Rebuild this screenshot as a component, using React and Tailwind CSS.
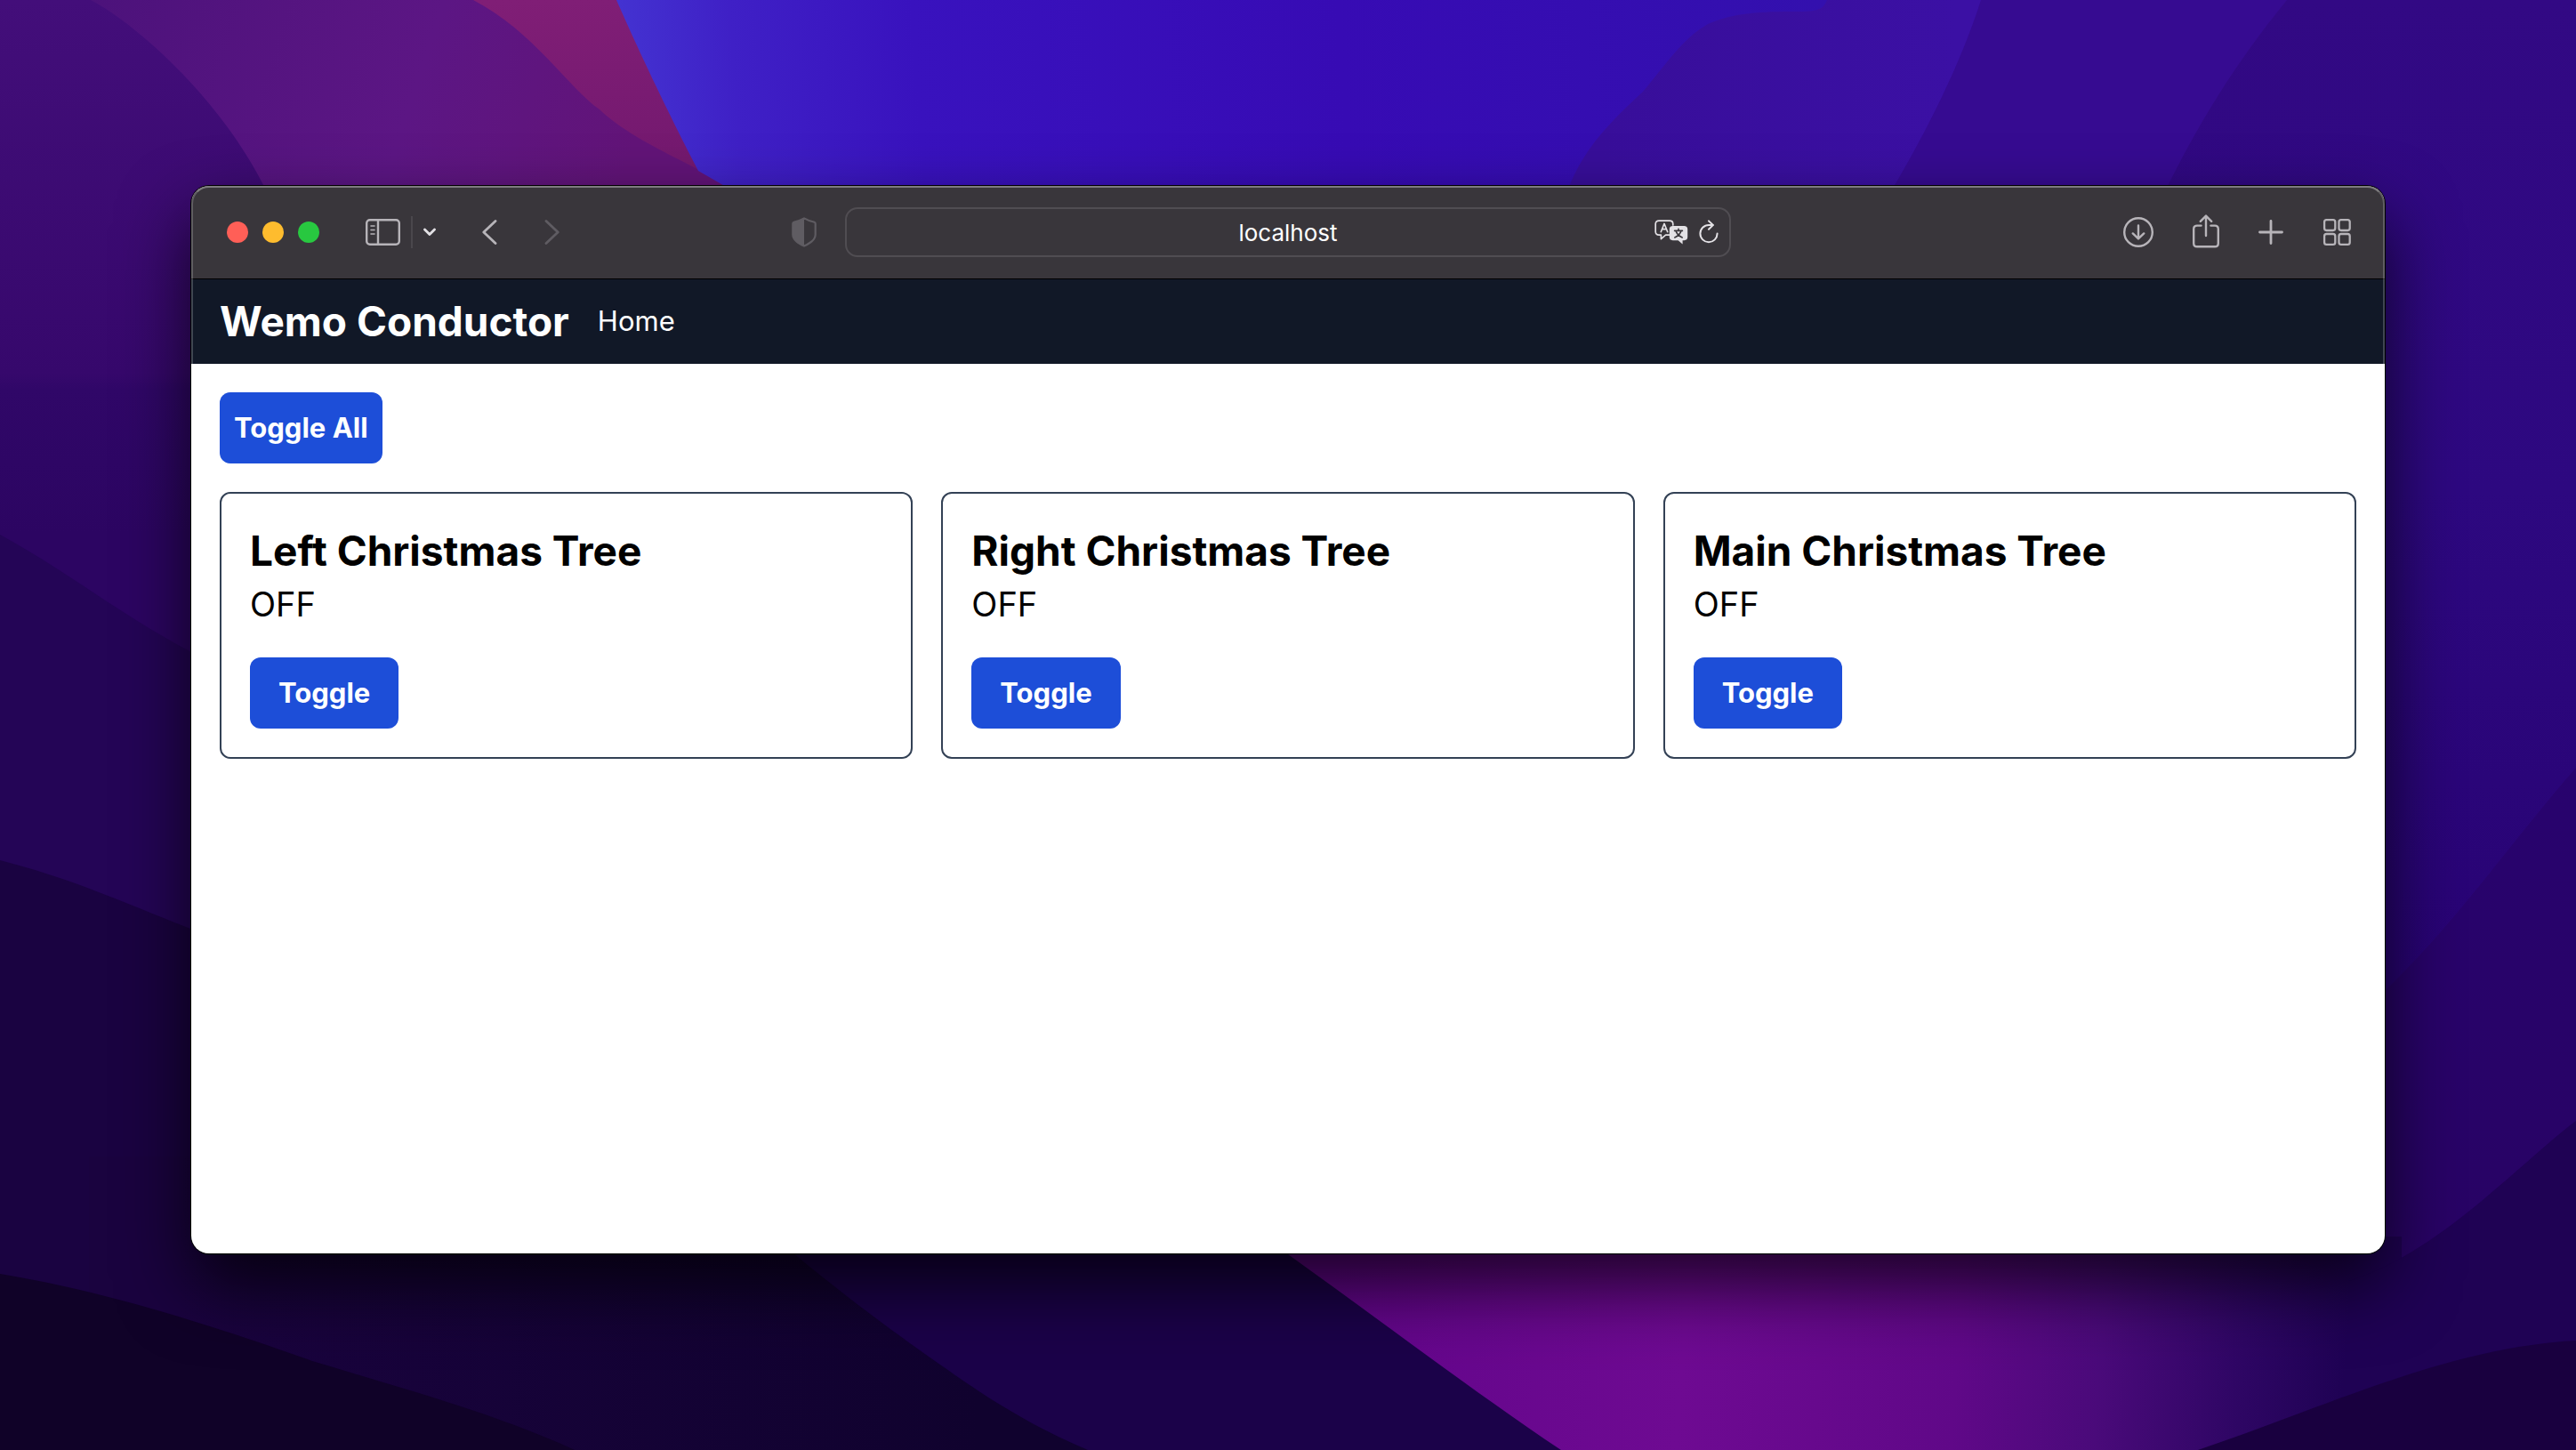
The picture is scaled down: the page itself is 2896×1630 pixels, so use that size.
const switches = [
  { id: 'left', name: 'Left Christmas Tree', state: 'OFF' },
  { id: 'right', name: 'Right Christmas Tree', state: 'OFF' },
  { id: 'main', name: 'Main Christmas Tree', state: 'OFF' },
];

function Wallpaper() {
  return (
    <svg
      className="absolute inset-0 h-full w-full"
      viewBox="0 0 2896 1630"
      preserveAspectRatio="xMidYMid slice"
      aria-hidden="true"
    >
      <defs>
        <linearGradient id="left" x1="0" y1="0" x2="0" y2="600" gradientUnits="userSpaceOnUse">
          <stop offset="0" stopColor="#430e7a" />
          <stop offset="0.7" stopColor="#36086c" />
          <stop offset="0.73" stopColor="#300768" />
          <stop offset="1" stopColor="#2c0562" />
        </linearGradient>
        <linearGradient id="plum" x1="100" y1="0" x2="700" y2="200" gradientUnits="userSpaceOnUse">
          <stop offset="0" stopColor="#4c127b" />
          <stop offset="0.6" stopColor="#5c1684" />
          <stop offset="1" stopColor="#621478" />
        </linearGradient>
        <linearGradient id="crimson" x1="0" y1="0" x2="0" y2="210" gradientUnits="userSpaceOnUse">
          <stop offset="0" stopColor="#801e76" />
          <stop offset="1" stopColor="#72186e" />
        </linearGradient>
        <linearGradient id="blue" x1="690" y1="100" x2="2050" y2="0" gradientUnits="userSpaceOnUse">
          <stop offset="0" stopColor="#4434d2" />
          <stop offset="0.1" stopColor="#3f20c6" />
          <stop offset="0.25" stopColor="#3912be" />
          <stop offset="0.6" stopColor="#370bb4" />
          <stop offset="1" stopColor="#3310ae" />
        </linearGradient>
        <linearGradient id="violet" x1="1800" y1="0" x2="2200" y2="0" gradientUnits="userSpaceOnUse">
          <stop offset="0" stopColor="#380e9a" />
          <stop offset="1" stopColor="#3b10a4" />
        </linearGradient>
        <linearGradient id="right" x1="0" y1="0" x2="0" y2="1100" gradientUnits="userSpaceOnUse">
          <stop offset="0" stopColor="#320984" />
          <stop offset="0.5" stopColor="#2d0880" />
          <stop offset="1" stopColor="#280374" />
        </linearGradient>
        <linearGradient id="right2" x1="0" y1="860" x2="0" y2="1430" gradientUnits="userSpaceOnUse">
          <stop offset="0" stopColor="#28036e" />
          <stop offset="1" stopColor="#280364" />
        </linearGradient>
        <linearGradient id="low" x1="200" y1="0" x2="1100" y2="0" gradientUnits="userSpaceOnUse">
          <stop offset="0" stopColor="#1a033f" />
          <stop offset="1" stopColor="#10022e" />
        </linearGradient>
        <linearGradient id="magenta" x1="1500" y1="1400" x2="2640" y2="1490" gradientUnits="userSpaceOnUse">
          <stop offset="0" stopColor="#62058a" />
          <stop offset="0.35" stopColor="#6e0a92" />
          <stop offset="0.62" stopColor="#600888" />
          <stop offset="0.76" stopColor="#4a0a7a" />
          <stop offset="0.9" stopColor="#2e0664" />
          <stop offset="1" stopColor="#1f0254" />
        </linearGradient>
      </defs>
      <rect width="2896" height="1630" fill="url(#left)" />
      <path d="M102 0C150 25 250 110 302 220H900V0Z" fill="url(#plum)" />
      <path d="M532 0C600 35 640 100 674 123C710 158 780 185 830 215V0Z" fill="url(#crimson)" />
      <path d="M693 0C715 50 745 115 785 192L825 215H2200V0Z" fill="url(#blue)" />
      <path
        d="M2054 0C2050 10 2045 13 2020 13C1980 13 1950 14 1920 27C1890 45 1875 70 1847 103C1815 133 1780 165 1762 215H2400V0Z"
        fill="url(#violet)"
      />
      <path d="M2227 0C2205 70 2165 150 2126 215H2896V0Z" fill="#360b91" />
      <path d="M2571 0C2530 50 2480 120 2434 215V1630H2896V0Z" fill="url(#right)" />
      <path d="M2600 1180C2720 1100 2810 960 2896 863V1630H2600Z" fill="url(#right2)" />
      <path d="M0 601C90 650 150 705 260 755V1630H0Z" fill="#240556" />
      <path d="M0 967C90 990 150 1020 260 1062V1630H0Z" fill="#1a0341" />
      <path d="M100 1300H1500V1630H100Z" fill="url(#low)" />
      <path d="M0 1432C140 1455 280 1505 351 1530C450 1560 560 1590 646 1630H0Z" fill="#100228" />
      <path d="M870 1390C950 1460 1050 1530 1099 1563C1140 1590 1180 1612 1223 1630H1900V1390Z" fill="#1b0249" />
      <path d="M1420 1390C1540 1475 1650 1560 1755 1630H2700V1390Z" fill="url(#magenta)" />
      <path d="M2640 1440C2740 1410 2830 1310 2896 1260V1630H2640Z" fill="#1f0254" />
      <path d="M2471 1630C2620 1580 2750 1515 2896 1507V1630Z" fill="#19003f" />
    </svg>
  );
}

function ToolbarButton({ label, disabled, className = '', children }) {
  return (
    <button type="button" aria-label={label} disabled={disabled} className={`shrink-0 ${className}`}>
      {children}
    </button>
  );
}

const line = { fill: 'none', stroke: 'currentColor', strokeLinecap: 'round', strokeLinejoin: 'round' };

function Toolbar() {
  return (
    <header className="relative z-10 grid h-26 grid-cols-[minmax(0,1fr)_996px_minmax(0,1fr)] items-center bg-[#39363b] text-[#b7b4b9] shadow-[0_1px_0_#000]">
      <div className="flex items-center pl-10">
        <div className="flex gap-4">
          <ToolbarButton label="Close" className="size-6 rounded-full bg-[#ff5f57]" />
          <ToolbarButton label="Minimize" className="size-6 rounded-full bg-[#febc2e]" />
          <ToolbarButton label="Zoom" className="size-6 rounded-full bg-[#28c840]" />
        </div>
        <ToolbarButton label="Show sidebar" className="ml-13">
          <svg width="39" height="30" viewBox="0 0 39 30" {...line} strokeWidth="2.4">
            <rect x="1.2" y="1.2" width="36.6" height="27.6" rx="3.6" />
            <path d="M14 1V29" />
            <path d="M6 8H10M6 12.5H10M6 17H10" strokeWidth="1.6" />
          </svg>
        </ToolbarButton>
        <div className="mx-3 h-9 w-0.5 bg-[#4a474c]" />
        <ToolbarButton label="Tab groups" className="text-[#e3e1e5]">
          <svg width="14" height="10" viewBox="0 0 14 10" {...line} strokeWidth="2.8">
            <path d="M1.5 2L7 7.6L12.5 2" />
          </svg>
        </ToolbarButton>
        <ToolbarButton label="Back" className="ml-13">
          <svg width="17" height="28" viewBox="0 0 17 28" {...line} strokeWidth="2.8">
            <path d="M15 1.5L1.8 14L15 26.5" />
          </svg>
        </ToolbarButton>
        <ToolbarButton label="Forward" disabled className="ml-13 text-[#5f5c62]">
          <svg width="18" height="28" viewBox="0 0 18 28" {...line} strokeWidth="2.8">
            <path d="M3 1.5L16.2 14L3 26.5" />
          </svg>
        </ToolbarButton>
        <ToolbarButton label="Privacy report" className="mr-8 ml-auto text-[#5f5c62]">
          <svg width="28" height="34" viewBox="0 0 28 34" {...line} strokeWidth="2.2">
            <path d="M14 1.4C10.5 3.4 5.5 5 2.4 5.8C1.6 6 1.3 6.6 1.3 7.4V19.5C1.3 26 8 29.6 14 32.6C20 29.6 26.7 26 26.7 19.5V7.4C26.7 6.6 26.4 6 25.6 5.8C22.5 5 17.5 3.4 14 1.4Z" />
            <path d="M14 1.4C10.5 3.4 5.5 5 2.4 5.8C1.6 6 1.3 6.6 1.3 7.4V19.5C1.3 26 8 29.6 14 32.6Z" fill="currentColor" stroke="none" />
          </svg>
        </ToolbarButton>
      </div>

      <div className="flex h-14 items-center rounded-[14px] border-2 border-[#504d52] pr-3 text-[#e3e1e5]">
        <input
          type="text"
          aria-label="Address"
          defaultValue="localhost"
          className="min-w-0 flex-1 bg-transparent pt-0.5 pl-21 text-center text-[26px] leading-8 text-white outline-none"
        />
        <ToolbarButton label="Translate">
          <svg width="38" height="28" viewBox="0 0 38 28" {...line} strokeWidth="1.7">
            <path d="M17 17.2H12.6L7.4 21.6V17.2H5C2.6 17.2 1.2 15.8 1.2 13.6V4.8C1.2 2.6 2.6 1.2 5 1.2H17C19.4 1.2 20.8 2.6 20.8 4.8V6" />
            <path d="M7.3 13.6L11 4.4L14.7 13.6M8.6 10.6H13.4" strokeWidth="1.6" />
            <path
              d="M20.6 7H33.4C35.8 7 37.2 8.4 37.2 10.6V19.6C37.2 21.8 35.8 23.2 33.4 23.2H31.6V27.4L26.6 23.2H20.6C18.2 23.2 16.8 21.8 16.8 19.6V10.6C16.8 8.4 18.2 7 20.6 7Z"
              fill="currentColor"
              stroke="none"
            />
            <path d="M22.6 12.4H31.4M27 10.2V12.4M30 12.6C29 16 26.6 18.4 22.8 20M24 12.6C25 16 27.4 18.4 31.2 20" stroke="#39363b" strokeWidth="1.6" />
          </svg>
        </ToolbarButton>
        <ToolbarButton label="Reload" className="ml-3">
          <svg width="22" height="28" viewBox="0 0 22 28" {...line} strokeWidth="2">
            <path d="M20.6 15.6A9.6 9.6 0 1 1 11 6H15.6" />
            <path d="M11 1.4L15.8 6L11 10.8" />
          </svg>
        </ToolbarButton>
      </div>

      <div className="flex items-center justify-end gap-11 pr-9.5">
        <ToolbarButton label="Downloads">
          <svg width="34" height="34" viewBox="0 0 34 34" {...line} strokeWidth="2.4">
            <circle cx="17" cy="17" r="15.8" />
            <path d="M17 9.4V24M10.8 18.4L17 24.4L23.2 18.4" />
          </svg>
        </ToolbarButton>
        <ToolbarButton label="Share">
          <svg width="30" height="40" viewBox="0 0 30 40" {...line} strokeWidth="2.4">
            <path d="M9.6 12.6H5C2.6 12.6 1.2 14 1.2 16.4V32.4C1.2 34.8 2.6 36.2 5 36.2H25C27.4 36.2 28.8 34.8 28.8 32.4V16.4C28.8 14 27.4 12.6 25 12.6H20.4" />
            <path d="M15 2.2V24M8.8 7.8L15 1.6L21.2 7.8" />
          </svg>
        </ToolbarButton>
        <ToolbarButton label="New tab">
          <svg width="28" height="28" viewBox="0 0 28 28" {...line} strokeWidth="2.8">
            <path d="M14 1.5V26.5M1.5 14H26.5" />
          </svg>
        </ToolbarButton>
        <ToolbarButton label="Tab overview">
          <svg width="32" height="30" viewBox="0 0 32 30" {...line} strokeWidth="2.3">
            <rect x="2.1" y="1.2" width="12.2" height="11.8" rx="2.4" />
            <rect x="18.5" y="1.2" width="12.2" height="11.8" rx="2.4" />
            <rect x="2.1" y="17" width="12.2" height="11.8" rx="2.4" />
            <rect x="18.5" y="17" width="12.2" height="11.8" rx="2.4" />
          </svg>
        </ToolbarButton>
      </div>
    </header>
  );
}

function SwitchCard({ name, state }) {
  return (
    <article className="rounded-xl border-2 border-[#334155] p-8">
      <h2 className="text-[46px] leading-16 font-bold">{name}</h2>
      <p className="text-[38px] leading-14">{state}</p>
      <button type="button" className="mt-8 rounded-xl bg-[#1d4ed8] px-8 py-4 text-[31px] leading-12 font-bold text-white">
        Toggle
      </button>
    </article>
  );
}

export default function App() {
  return (
    <div className="relative flex min-h-screen bg-[#1a0341] px-[215px] pt-[209px] pb-[221px] font-['Inter',sans-serif]">
      <Wallpaper />
      <div className="relative flex flex-1 flex-col overflow-hidden rounded-[20px] bg-white text-black shadow-[0_0_0_1px_#000,0_36px_80px_rgba(0,0,0,0.75)]">
        <Toolbar />
        <nav className="flex items-center gap-8 bg-[#111827] px-8 py-4 text-white">
          <span className="text-[46px] leading-16 font-bold">Wemo Conductor</span>
          <a href="#home" className="text-[31px] leading-12">
            Home
          </a>
        </nav>
        <main className="flex flex-col items-start gap-8 p-8">
          <button type="button" className="rounded-xl bg-[#1d4ed8] p-4 text-[31px] leading-12 font-bold text-white">
            Toggle All
          </button>
          <section className="grid w-full grid-cols-3 gap-8">
            {switches.map((s) => (
              <SwitchCard key={s.id} name={s.name} state={s.state} />
            ))}
          </section>
        </main>
        <div className="pointer-events-none absolute inset-0 z-20 rounded-[20px] border-x-2 border-t-2 border-x-white/20 border-t-white/35" />
      </div>
    </div>
  );
}
